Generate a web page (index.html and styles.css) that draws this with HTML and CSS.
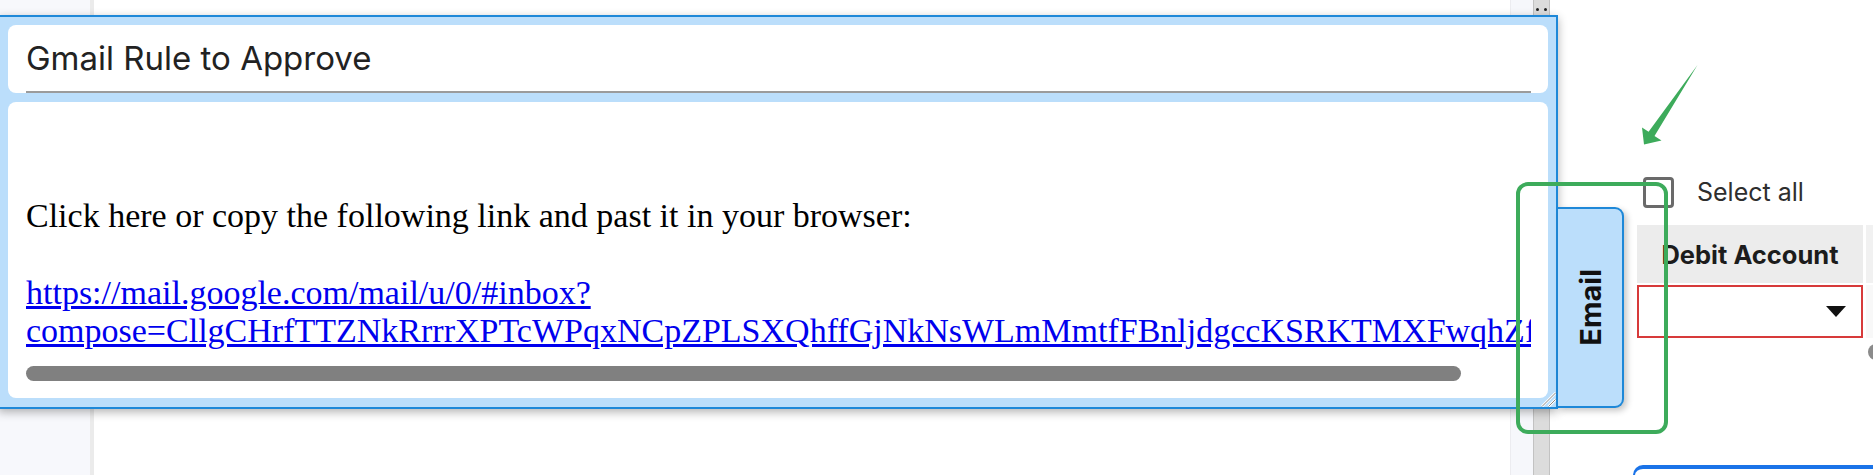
FILE: index.html
```html
<!DOCTYPE html>
<html lang="en">
<head>
<meta charset="utf-8">
<title>Gmail Rule to Approve</title>
<link rel="stylesheet" href="styles.css">
</head>
<body>
<div class="app">
  <aside class="sidebar"></aside>
  <main class="main"></main>
  <div class="splitter">
    <div class="splitter-pad"></div>
    <div class="splitter-bar"><span class="grip"></span><span class="grip"></span></div>
  </div>
  <section class="panel">
    <label class="select-all"><span class="checkbox"></span><span class="select-label">Select all</span></label>
    <div class="grid">
      <div class="th">Debit Account</div>
      <div class="th th-next"></div>
      <div class="td-select"><span class="caret"></span></div>
      <div class="td-next"></div>
    </div>
    <span class="handle-dot"></span>
    <div class="action-bar"></div>
  </section>
</div>

<div class="modal">
  <div class="card title-card">
    <div class="title-input">Gmail Rule to Approve</div>
  </div>
  <div class="card body-card">
    <div class="mail-scroll">
      <p class="mail-p lead">Click here or copy the following link and past it in your browser:</p>
      <p class="mail-p"><a class="mail-link" href="#">https://mail.google.com/mail/u/0/#inbox?<wbr>compose=CllgCHrfTTZNkRrrrXPTcWPqxNCpZPLSXQhffGjNkNsWLmMmtfFBnljdgccKSRKTMXFwqhZfLqVbRkTzWs</a></p>
    </div>
    <div class="hscroll-thumb"></div>
  </div>
  <svg class="resize-grip" width="15" height="15" viewBox="0 0 15 15">
    <path d="M14.5 1 L1 14.5 M14.5 7.5 L7.5 14.5" stroke="#fff" stroke-width="2.6" fill="none"/>
    <path d="M14.5 1 L1 14.5 M14.5 7.5 L7.5 14.5" stroke="#8a8a8a" stroke-width="1" fill="none"/>
  </svg>
  <div class="tab"><span class="tab-label">Email</span></div>
</div>

<div class="callout-box"></div>
<svg class="callout-arrow" width="80" height="95" viewBox="0 0 80 95">
  <polygon points="67.5,5 24.5,76 31.5,80.5 14,84.5 12,67.5 18.6,71.8" fill="#3dab5b"/>
</svg>
</body>
</html>
```
FILE: styles.css
```css
* { box-sizing: border-box; }
html, body { margin: 0; height: 100%; overflow: hidden; background: #fff; }
body { font-family: Inter, "Noto Sans", sans-serif; color: #222; position: relative; }

.app { display: flex; height: 475px; }
.sidebar { width: 94px; flex: none; background: #f7f8fc; border-right: 4px solid #ebebeb; }
.main { flex: 1; background: #fff; }
.splitter { width: 40px; flex: none; display: flex; }
.splitter-pad { width: 23px; background: #f6f7fb; border-left: 1px solid #ececf0; }
.splitter-bar {
  width: 17px; background: #dcdcdc;
  border-left: 1px solid #c2c2c2; border-right: 1px solid #c2c2c2;
  display: flex; justify-content: center; gap: 5px; padding-top: 8px;
}
.grip { width: 3px; height: 3px; border-radius: 50%; background: #222; }

.panel {
  width: 323px; flex: none; position: relative;
  padding: 177px 0 0 87px;
  display: flex; flex-direction: column; align-items: flex-start;
}
.select-all { display: flex; align-items: center; gap: 23px; margin-left: 6px; height: 31px; }
.checkbox { width: 31px; height: 31px; border: 3px solid #6a6a6a; border-radius: 4px; flex: none; }
.select-label { font-size: 25px; color: #2e2e2e; line-height: 31px; }

.grid {
  align-self: stretch; margin-top: 17px;
  display: grid; grid-template-columns: 226px 1fr; column-gap: 3px; row-gap: 2px;
}
.th {
  height: 58px; background: #ececec;
  display: flex; align-items: center; justify-content: center;
  font-weight: 700; font-size: 25.5px; color: #1c1c1c; white-space: nowrap;
}
.th-next { background: #f1f1f1; }
.td-select {
  height: 53px; border: 2px solid #d73a3a;
  display: flex; align-items: center; justify-content: flex-end; padding-right: 15px;
}
.caret { width: 0; height: 0; border-left: 10px solid transparent; border-right: 10px solid transparent; border-top: 11px solid #111; }
.td-next { background: #f8f8f8; }
.handle-dot { position: absolute; left: 318px; top: 344px; width: 16px; height: 16px; border-radius: 50%; background: #8b8b8b; }
.action-bar {
  margin-top: 127px; margin-left: -4px; width: calc(100% + 4px); height: 20px;
  border-top: 4px solid #1a73e8; border-left: 2px solid #1a73e8; border-top-left-radius: 10px;
}

.modal {
  position: absolute; left: -2px; top: 15px; width: 1560px; height: 394px;
  background: #bbdefb; border: 2px solid #1e88d8;
  padding: 8px 8px 9px 8px;
  display: flex; flex-direction: column; gap: 9px;
  box-shadow: 0 3px 9px rgba(0, 0, 0, 0.3);
}
.card { background: #fff; border-radius: 8px; }
.title-card { height: 67.5px; flex: none; padding: 0 17px 0 18px; }
.title-input {
  padding-top: 13px; height: 67.5px; line-height: 40px; font-size: 33px; color: #222;
  border-bottom: 2px solid #9b9b9b; white-space: nowrap;
}
.body-card { flex: 1; padding: 18.5px 17px 0 18px; display: flex; flex-direction: column; }
.mail-scroll {
  overflow: hidden; font-family: "Liberation Serif", "Times New Roman", serif;
  font-size: 34px; line-height: 38.4px; color: #000;
}
.mail-p { margin: 0; }
.lead { margin: 76.8px 0 38.4px; }
.mail-link { color: #0000ee; text-decoration: underline; }
.hscroll-thumb { margin-top: 16px; height: 15px; width: 1435px; border-radius: 8px; background: #808080; flex: none; }
.resize-grip { position: absolute; right: 0; bottom: 0; }

.tab {
  position: absolute; left: calc(100% + 2px); top: 190px; width: 66px; height: 201px;
  background: #bbdefb; border: 2px solid #1e88d8; border-left: 0; border-radius: 0 9px 9px 0;
  box-shadow: 3px 3px 6px rgba(0, 0, 0, 0.22);
  display: flex; align-items: center; justify-content: center;
}
.tab-label { writing-mode: vertical-rl; transform: rotate(180deg); font-weight: 700; font-size: 29px; color: #111; }

.callout-box {
  position: absolute; left: 1516px; top: 182px; width: 152px; height: 252px;
  border: 4px solid #3dab5b; border-radius: 12px;
}
.callout-arrow { position: absolute; left: 1630px; top: 60px; }
```
